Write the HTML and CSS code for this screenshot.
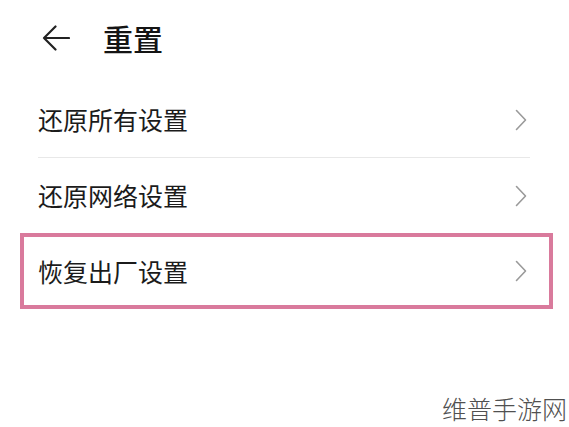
FILE: index.html
```html
<!DOCTYPE html>
<html lang="zh-CN">
<head>
<meta charset="utf-8">
<title>重置</title>
<link rel="stylesheet" href="styles.css">
</head>
<body>
<div class="page">
  <header class="header">
    <svg class="back" width="28" height="26" viewBox="0 0 28 26" aria-hidden="true">
      <path d="M27 13 H2 M13.5 1.5 L2 13 L13.5 24.5" fill="none" stroke="#222" stroke-width="2.2" stroke-linecap="round" stroke-linejoin="round"/>
    </svg>
    <h1 class="title">重置</h1>
  </header>
  <div class="list">
    <div class="row">
      <span class="label">还原所有设置</span>
      <svg class="chev" width="12" height="22" viewBox="0 0 12 22" aria-hidden="true"><polyline points="1.5,1.5 10.5,11 1.5,20.5" fill="none" stroke="#9a9a9a" stroke-width="1.6" stroke-linecap="round" stroke-linejoin="round"/></svg>
    </div>
    <div class="divider"></div>
    <div class="row">
      <span class="label">还原网络设置</span>
      <svg class="chev" width="12" height="22" viewBox="0 0 12 22" aria-hidden="true"><polyline points="1.5,1.5 10.5,11 1.5,20.5" fill="none" stroke="#9a9a9a" stroke-width="1.6" stroke-linecap="round" stroke-linejoin="round"/></svg>
    </div>
    <div class="row highlight">
      <span class="label">恢复出厂设置</span>
      <svg class="chev" width="12" height="22" viewBox="0 0 12 22" aria-hidden="true"><polyline points="1.5,1.5 10.5,11 1.5,20.5" fill="none" stroke="#9a9a9a" stroke-width="1.6" stroke-linecap="round" stroke-linejoin="round"/></svg>
    </div>
  </div>
  <div class="watermark">维普手游网</div>
</div>
</body>
</html>
```
FILE: styles.css
```css
* { box-sizing: border-box; }
html, body {
  margin: 0;
  padding: 0;
  background: #ffffff;
}
body {
  font-family: "Noto Sans CJK SC", "Noto Sans", sans-serif;
  color: #1b1b1b;
}
.page {
  position: relative;
  width: 569px;
  height: 427px;
  overflow: hidden;
}
.header {
  height: 78px;
  display: flex;
  align-items: center;
  padding-left: 42px;
  padding-bottom: 2px;
}
.back {
  flex: none;
}
.title {
  margin: 0 0 0 33px;
  font-size: 30px;
  font-weight: 500;
  line-height: 1;
  color: #141414;
}
.list {
  margin-top: 4px;
}
.row {
  height: 75px;
  display: flex;
  align-items: center;
  justify-content: space-between;
  padding: 0 42px 0 38px;
}
.label {
  font-size: 25px;
  line-height: 1;
  color: #1b1b1b;
}
.chev {
  flex: none;
}
.divider {
  height: 1px;
  margin: 0 39px 0 38px;
  background: #e8e8e8;
}
.row.highlight {
  height: 76px;
  margin: 0 16px 0 20px;
  border: 4px solid #d97a9c;
  padding: 0 22px 0 14px;
}
.watermark {
  position: absolute;
  right: 2px;
  bottom: 6px;
  font-size: 25px;
  line-height: 1;
  font-weight: 200;
  color: #505050;
  letter-spacing: 0;
}
```
